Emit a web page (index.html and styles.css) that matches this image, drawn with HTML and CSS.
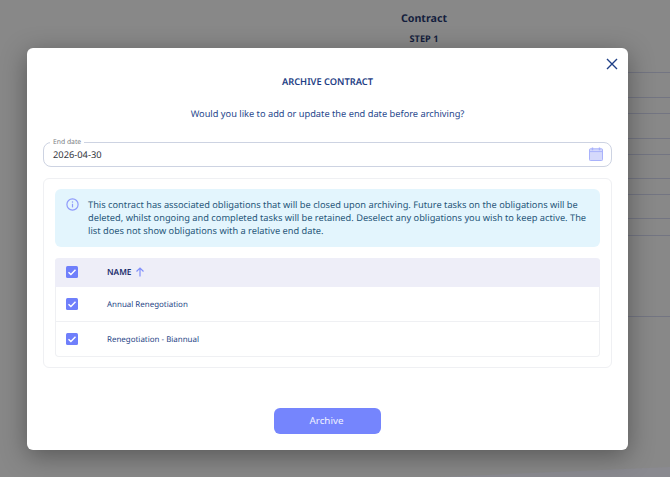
FILE: index.html
```html
<!DOCTYPE html>
<html lang="en">
<head>
<meta charset="utf-8">
<title>Archive contract</title>
<link rel="stylesheet" href="styles.css">
</head>
<body>
<main class="page">
  <h1 class="page-title">Contract</h1>
  <h2 class="page-step">STEP 1</h2>
  <div class="rows">
    <div class="row r25"></div>
    <div class="row r16"></div>
    <div class="row r25"></div>
    <div class="row r16"></div>
    <div class="row r24"></div>
    <div class="row r16"></div>
    <div class="row r24"></div>
    <div class="row r17"></div>
    <div class="row r81"></div>
  </div>
</main>
<div class="wedge"></div>
<section class="modal">
  <button class="close" aria-label="Close">
    <svg width="12" height="12" viewBox="0 0 12 12"><path d="M1 1l10 10M11 1L1 11" fill="none" stroke="#1f3f86" stroke-width="1.4"/></svg>
  </button>
  <h2 class="modal-title">ARCHIVE CONTRACT</h2>
  <p class="question">Would you like to add or update the end date before archiving?</p>
  <div class="field">
    <span class="field-label">End date</span>
    <span class="field-value">2026-04-30</span>
    <svg class="cal" width="14" height="14" viewBox="0 0 14 14">
      <rect x="0.5" y="1.8" width="13" height="11.7" rx="0.8" fill="#d5d9fb" stroke="#a9b2fb"/>
      <path d="M0.5 4.6h13" stroke="#a9b2fb"/>
      <path d="M3.5 0.6v2.6M10.5 0.6v2.6" stroke="#a9b2fb" stroke-width="1.4"/>
    </svg>
  </div>
  <div class="panel">
    <div class="notice">
      <svg class="info" width="13" height="13" viewBox="0 0 13 13">
        <circle cx="6.5" cy="6.5" r="5.6" fill="none" stroke="#8f9bfb" stroke-width="1.2"/>
        <path d="M6.5 5.8v3.6" stroke="#8f9bfb" stroke-width="1.2"/>
        <circle cx="6.5" cy="3.9" r="0.75" fill="#8f9bfb"/>
      </svg>
      <p class="notice-text">This contract has associated obligations that will be closed upon archiving. Future tasks on the obligations will be deleted, whilst ongoing and completed tasks will be retained. Deselect any obligations you wish to keep active. The list does not show obligations with a relative end date.</p>
    </div>
    <div class="table">
      <div class="thead">
        <span class="check"><svg width="12" height="12" viewBox="0 0 12 12"><path d="M2.5 6.2l2.4 2.3 4.6-4.8" fill="none" stroke="#fff" stroke-width="1.4"/></svg></span>
        <span class="th-name">NAME</span>
        <svg class="sort" width="10" height="10" viewBox="0 0 10 10"><path d="M5 9.5V1M1.5 4.5L5 1l3.5 3.5" fill="none" stroke="#8290fb" stroke-width="1.2"/></svg>
      </div>
      <div class="tr">
        <span class="check"><svg width="12" height="12" viewBox="0 0 12 12"><path d="M2.5 6.2l2.4 2.3 4.6-4.8" fill="none" stroke="#fff" stroke-width="1.4"/></svg></span>
        <span class="td-name">Annual Renegotiation</span>
      </div>
      <div class="tr">
        <span class="check"><svg width="12" height="12" viewBox="0 0 12 12"><path d="M2.5 6.2l2.4 2.3 4.6-4.8" fill="none" stroke="#fff" stroke-width="1.4"/></svg></span>
        <span class="td-name">Renegotiation - Biannual</span>
      </div>
    </div>
  </div>
  <div class="actions"><button class="archive">Archive</button></div>
</section>
</body>
</html>
```
FILE: styles.css
```css
* { box-sizing: border-box; }
html, body { margin: 0; height: 100%; }
body {
  width: 670px;
  height: 477px;
  overflow: hidden;
  position: relative;
  background: #888888;
  font-family: "Noto Sans", "Open Sans", sans-serif;
  text-rendering: geometricPrecision;
}
.page { display: flex; flex-direction: column; align-items: center; padding-top: 11px; padding-left: 178px; }
.page-title { margin: 0; font-size: 10.7px; line-height: 16px; font-weight: 700; color: #141e3d; }
.page-step { margin: 5px 0 0; font-size: 9.2px; line-height: 14px; font-weight: 700; color: #141e3d; }
.rows { align-self: flex-end; width: 260px; margin-top: 26px; border-top: 1px solid #737582; }
.row { border-bottom: 1px solid #737582; }
.r25 { height: 25px; }
.r24 { height: 24px; }
.r16 { height: 16px; }
.r17 { height: 17px; }
.r81 { height: 81px; }
.wedge {
  position: absolute;
  right: 0;
  bottom: 0;
  width: 230px;
  height: 10px;
  background: #8a8a90;
  clip-path: polygon(100% 0, 100% 100%, 0 100%);
}
.modal {
  position: absolute;
  left: 27px;
  top: 48px;
  width: 601px;
  height: 401.5px;
  background: #fff;
  border-radius: 6px;
  padding: 27px 16px 16px;
  display: flex;
  flex-direction: column;
  box-shadow: 0 6px 26px rgba(0, 0, 0, 0.36);
}
.close {
  position: absolute;
  top: 9.5px;
  right: 10px;
  width: 12px;
  height: 12px;
  padding: 0;
  border: 0;
  background: none;
  display: flex;
}
.modal-title { margin: 0; text-align: center; font-size: 9.3px; line-height: 14px; font-weight: 600; color: #1f3f86; }
.question { margin: 17px 0 0; text-align: center; font-size: 9.25px; line-height: 16px; color: #26468c; }
.field {
  margin-top: 20px;
  height: 24.5px;
  flex: none;
  border: 1px solid #cdd3e2;
  border-radius: 8px;
  display: flex;
  align-items: center;
  justify-content: space-between;
  padding: 0 8px 0 9px;
  position: relative;
}
.field-label {
  position: absolute;
  top: -7px;
  left: 6px;
  padding: 0 3px;
  background: #fff;
  font-size: 6.8px;
  line-height: 11px;
  color: #7d7f86;
}
.field-value { font-size: 9.3px; color: #35383f; }
.panel {
  margin-top: 11px;
  height: 190px;
  flex: none;
  border: 1px solid #eff0f3;
  border-radius: 6px;
  padding: 10px 11px;
  display: flex;
  flex-direction: column;
  gap: 11px;
}
.notice {
  background: #e3f5fd;
  border-radius: 6px;
  height: 58px;
  flex: none;
  padding: 9px 12px 0 11px;
  display: flex;
  gap: 9px;
}
.info { flex: none; }
.notice-text { margin: 0; font-size: 9.25px; line-height: 13.4px; color: #265679; }
.table {
  flex: 1;
  border: 1px solid #eff0f3;
  border-top: 0;
  border-radius: 4px;
  display: flex;
  flex-direction: column;
}
.thead {
  height: 29px;
  background: #eeeef8;
  display: flex;
  align-items: center;
  padding-left: 11px;
  margin: 0 -1px;
  border-radius: 4px 4px 0 0;
}
.tr {
  flex: 1;
  display: flex;
  align-items: center;
  padding-left: 10px;
}
.tr + .tr { border-top: 1px solid #eff0f3; }
.check {
  width: 12px;
  height: 12px;
  border-radius: 1.5px;
  background: #6f7ffb;
  display: flex;
  flex: none;
}
.th-name { margin-left: 29px; font-size: 8.3px; font-weight: 600; color: #1c2f6e; }
.sort { margin-left: 3px; }
.td-name { margin-left: 29px; padding-top: 2px; font-size: 7.95px; color: #2a4888; }
.actions { margin-top: auto; display: flex; justify-content: center; }
.archive {
  width: 107px;
  height: 26px;
  border: 0;
  border-radius: 6px;
  background: #7585fd;
  color: #f0f2ff;
  font-family: inherit;
  font-size: 9.8px;
  padding: 0 2px 0 0;
}
```
